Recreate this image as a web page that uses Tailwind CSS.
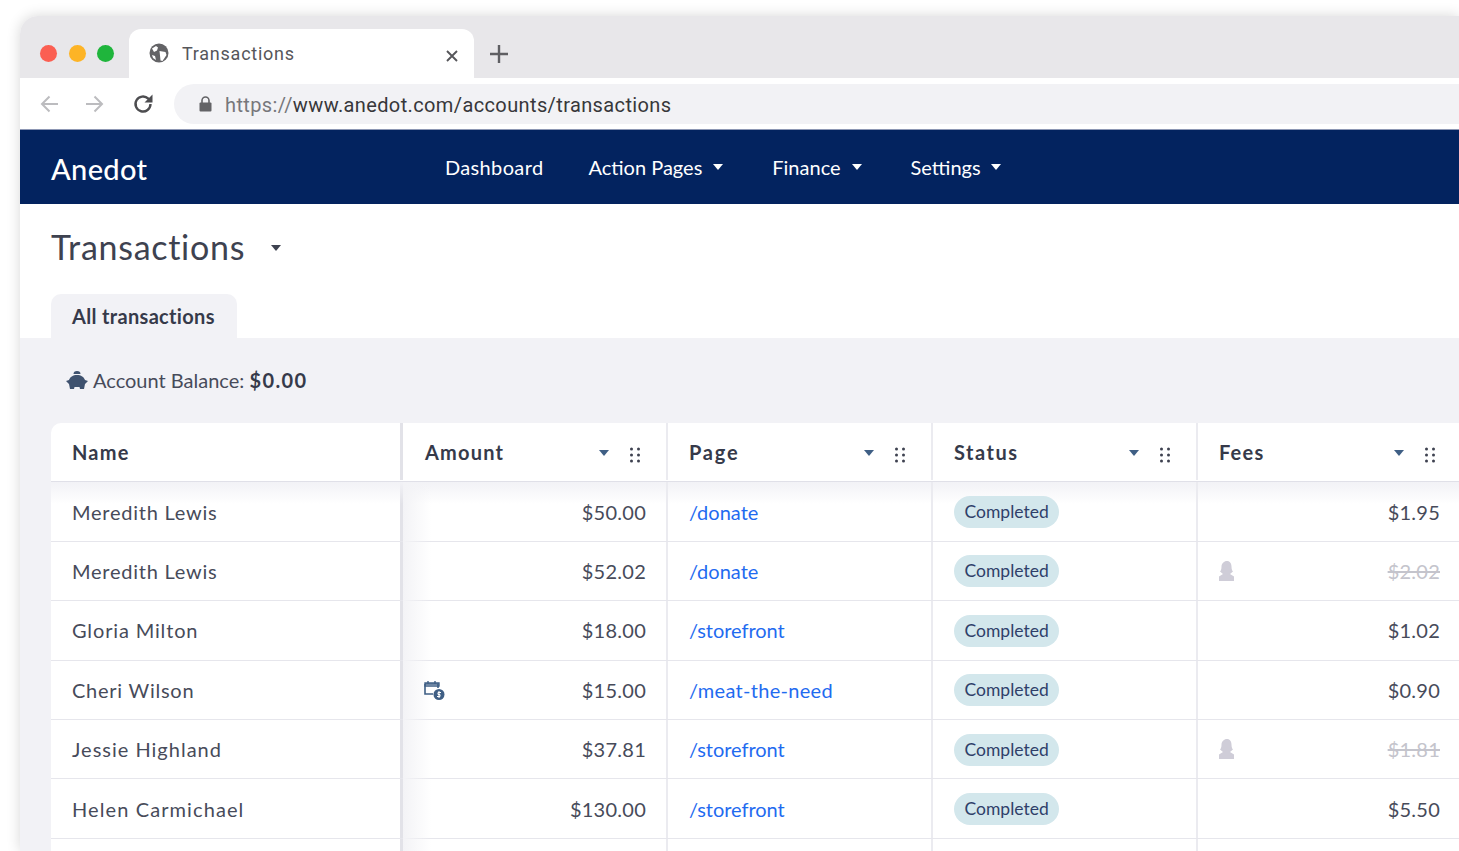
<!DOCTYPE html>
<html lang="en">
<head>
<meta charset="UTF-8">
<title>Transactions</title>
<script src="https://cdn.jsdelivr.net/npm/@tailwindcss/browser@4"></script>
</head>
<body class="bg-white h-[851px] w-[1459px] overflow-hidden font-['Lato',sans-serif]">

<!-- browser window -->
<div class="ml-[20px] mt-[16px] w-[1439px] h-[835px] rounded-tl-[18px] overflow-hidden bg-white shadow-[0_0_14px_rgba(0,0,0,0.16)]">

  <!-- tab strip -->
  <div class="h-[62px] bg-[#e8e7ea] flex items-end font-['Roboto',sans-serif]">
    <div class="w-[109px] h-[62px] flex items-center gap-[11.700px] pl-[20px] pt-[13px]">
      <span class="w-[17px] h-[17px] rounded-full bg-[#fb5f52]"></span>
      <span class="w-[17px] h-[17px] rounded-full bg-[#fdb426]"></span>
      <span class="w-[17px] h-[17px] rounded-full bg-[#1fb53c]"></span>
    </div>
    <div class="w-[345px] h-[49px] bg-white rounded-t-[12px] flex items-center pl-[20px] pr-[16px] pb-[1px]">
      <svg class="w-[20px] h-[20px] mr-[13px]" viewBox="0 0 20 20"><circle cx="10" cy="10" r="9.500" fill="#636366"/><path d="M3 5.500 7 3l2 1.500-1 3-3 1.500zM10.500 8l6 1 1 3-4 6-2-.5-.5-5zM3 12l3 1 1 4-3-2z" fill="#fff"/></svg>
      <span class="text-[18px] text-[#56565a] tracking-[0.75px]">Transactions</span>
      <svg class="w-[12px] h-[12px] ml-auto mt-[5px]" viewBox="0 0 12 12"><path d="M1 1l10 10M11 1 1 11" stroke="#56565a" stroke-width="1.900"/></svg>
    </div>
    <svg class="w-[18px] h-[18px] ml-[16px] mb-[15px]" viewBox="0 0 18 18"><path d="M9 0v18M0 9h18" stroke="#5f5f63" stroke-width="2.400"/></svg>
  </div>

  <!-- toolbar -->
  <div class="h-[52px] bg-white flex items-center border-b border-[#8d97b4] font-['Roboto',sans-serif]">
    <svg class="w-[20px] h-[18px] ml-[20px]" viewBox="0 0 20 18"><path d="M18 9H2M9.500 1.500 2 9l7.500 7.500" fill="none" stroke="#bcbcbf" stroke-width="2"/></svg>
    <svg class="w-[20px] h-[18px] ml-[24px]" viewBox="0 0 20 18"><path d="M2 9h16M10.500 1.500 18 9l-7.500 7.500" fill="none" stroke="#bcbcbf" stroke-width="2"/></svg>
    <svg class="w-[22px] h-[22px] ml-[28px]" viewBox="0 0 22 22"><path d="M18.500 11a7.500 7.500 0 1 1-2.200-5.300L19 8.300" fill="none" stroke="#4d4d50" stroke-width="2.400"/><path d="M20.500 1.500v8h-8z" fill="#4d4d50"/></svg>
    <div class="ml-[20px] flex-1 h-[40px] bg-[#f2f2f5] rounded-l-[20px] flex items-center pl-[25px]">
      <svg class="w-[13px] h-[16px] mr-[13px]" viewBox="0 0 13 16"><path d="M3 7V4.500a3.500 3.500 0 0 1 7 0V7" fill="none" stroke="#636366" stroke-width="1.600"/><rect x="0.500" y="6.500" width="12" height="9" rx="1" fill="#636366"/></svg>
      <span class="text-[20px] tracking-[0.38px] text-[#37373a] pt-[3px]"><span class="text-[#77777b]">https://</span>www.anedot.com/accounts/transactions</span>
    </div>
  </div>

  <!-- app nav -->
  <nav class="h-[74px] bg-[#03235f] flex items-center text-white">
    <span class="ml-[31px] w-[394px] text-[29px] font-medium tracking-[0.35px] mt-[3px]">Anedot</span>
    <a class="text-[20px] mr-[45px] tracking-[0.35px]">Dashboard</a>
    <a class="text-[20px] mr-[49px] flex items-center gap-[11px]">Action Pages <svg class="w-[10px] h-[6px]" viewBox="0 0 10 6"><path d="M0 0h10L5 6z" fill="#fff"/></svg></a>
    <a class="text-[20px] mr-[49px] flex items-center gap-[11px]">Finance <svg class="w-[10px] h-[6px]" viewBox="0 0 10 6"><path d="M0 0h10L5 6z" fill="#fff"/></svg></a>
    <a class="text-[20px] flex items-center gap-[10px]">Settings <svg class="w-[10px] h-[6px]" viewBox="0 0 10 6"><path d="M0 0h10L5 6z" fill="#fff"/></svg></a>
  </nav>

  <!-- page title + tab -->
  <div class="h-[134px] bg-white pl-[31px] flex flex-col">
    <div class="h-[90px] flex items-center pb-[6px] gap-[26px]">
      <h1 class="text-[34px] tracking-[0.72px] text-[#3e4250]">Transactions</h1>
      <svg class="w-[10px] h-[6px] mt-[4px]" viewBox="0 0 10 6"><path d="M0 0h10L5 6z" fill="#3e4250"/></svg>
    </div>
    <div class="w-[186px] h-[44px] bg-[#f2f2f6] rounded-t-[10px] flex items-center pl-[21px] pb-[1px] text-[20px] font-bold text-[#363a4a] tracking-[0.33px]">All transactions</div>
  </div>

  <!-- gray content -->
  <div class="bg-[#f2f2f6] pl-[31px] h-[520px]">
    <div class="h-[85px] flex items-center pb-[1px] text-[20px] text-[#474b5a]">
      <svg class="w-[22px] h-[20px] ml-[15px] mr-[5px]" viewBox="0 0 22 20"><path d="M7.500 4a3.500 3 0 0 1 7 0z" fill="#3f526f"/><path d="M0 11l3-1c1-3 4-5 8-5s7 2 8 5l3 1-3 3-1 5h-4l-.5-2h-5l-.5 2H4l-1-5z" fill="#3f526f"/></svg>
      <span>Account Balance:&nbsp;<b class="font-bold text-[#363a4a] tracking-[1.400px]">$0.00</b></span>
    </div>

    <!-- table -->
    <div class="bg-white rounded-tl-[10px] w-[1408px] text-[20px] text-[#474b5a]">
      <div class="grid grid-cols-[352px_265px_265px_265px_261px] h-[59.400px] pb-[1px] border-b border-[#e0e0e8] font-bold text-[#363a4a] tracking-[1.2px]">
        <div class="flex items-center pl-[21px] border-r-[3px] border-[#e2e2e8]">Name</div>
        <div class="flex items-center pl-[22px] pr-[26px] border-r-2 border-[#ebebf0]">Amount
          <svg class="w-[10px] h-[6px] ml-auto mr-[21px] mt-[3px]" viewBox="0 0 10 6"><path d="M0 0h10L5 6z" fill="#3f5f85"/></svg>
          <svg class="w-[10px] h-[16px] mt-[6px]" viewBox="0 0 10 16"><g fill="#3e4250"><circle cx="1.500" cy="2" r="1.500"/><circle cx="8.500" cy="2" r="1.500"/><circle cx="1.500" cy="8" r="1.500"/><circle cx="8.500" cy="8" r="1.500"/><circle cx="1.500" cy="14" r="1.500"/><circle cx="8.500" cy="14" r="1.500"/></g></svg>
        </div>
        <div class="flex items-center pl-[21px] pr-[26px] border-r-2 border-[#ebebf0] tracking-[1.800px]">Page
          <svg class="w-[10px] h-[6px] ml-auto mr-[21px] mt-[3px]" viewBox="0 0 10 6"><path d="M0 0h10L5 6z" fill="#3f5f85"/></svg>
          <svg class="w-[10px] h-[16px] mt-[6px]" viewBox="0 0 10 16"><g fill="#3e4250"><circle cx="1.500" cy="2" r="1.500"/><circle cx="8.500" cy="2" r="1.500"/><circle cx="1.500" cy="8" r="1.500"/><circle cx="8.500" cy="8" r="1.500"/><circle cx="1.500" cy="14" r="1.500"/><circle cx="8.500" cy="14" r="1.500"/></g></svg>
        </div>
        <div class="flex items-center pl-[21px] pr-[26px] border-r-2 border-[#ebebf0] tracking-[1.500px]">Status
          <svg class="w-[10px] h-[6px] ml-auto mr-[21px] mt-[3px]" viewBox="0 0 10 6"><path d="M0 0h10L5 6z" fill="#3f5f85"/></svg>
          <svg class="w-[10px] h-[16px] mt-[6px]" viewBox="0 0 10 16"><g fill="#3e4250"><circle cx="1.500" cy="2" r="1.500"/><circle cx="8.500" cy="2" r="1.500"/><circle cx="1.500" cy="8" r="1.500"/><circle cx="8.500" cy="8" r="1.500"/><circle cx="1.500" cy="14" r="1.500"/><circle cx="8.500" cy="14" r="1.500"/></g></svg>
        </div>
        <div class="flex items-center pl-[21px] pr-[24px]">Fees
          <svg class="w-[10px] h-[6px] ml-auto mr-[21px] mt-[3px]" viewBox="0 0 10 6"><path d="M0 0h10L5 6z" fill="#3f5f85"/></svg>
          <svg class="w-[10px] h-[16px] mt-[6px]" viewBox="0 0 10 16"><g fill="#3e4250"><circle cx="1.500" cy="2" r="1.500"/><circle cx="8.500" cy="2" r="1.500"/><circle cx="1.500" cy="8" r="1.500"/><circle cx="8.500" cy="8" r="1.500"/><circle cx="1.500" cy="14" r="1.500"/><circle cx="8.500" cy="14" r="1.500"/></g></svg>
        </div>
      </div>

      <div class="relative">
        <div class="absolute inset-x-0 top-0 h-[22px] bg-gradient-to-b from-[#f2f2f6] to-transparent"></div>
        <div class="absolute left-[352px] top-0 w-[28px] h-[420px] bg-gradient-to-r from-[#f3f3f6] to-transparent"></div>

        <div class="grid grid-cols-[352px_265px_265px_265px_261px] h-[59.400px] border-b border-[#e6e6ec]">
          <div class="flex items-center pl-[21px] border-r-[3px] border-[#e2e2e8] tracking-[0.75px]">Meredith Lewis</div>
          <div class="flex items-center justify-end pr-[20px] border-r-2 border-[#ebebf0] tracking-[0.25px] relative">$50.00</div>
          <div class="flex items-center pl-[21px] border-r-2 border-[#ebebf0] text-[#1f6bf0] tracking-[0px] relative">/donate</div>
          <div class="flex items-center pl-[21px] border-r-2 border-[#ebebf0] relative"><span class="h-[32px] px-[10.500px] mt-[1px] rounded-full bg-[#d3e7ec] text-[#2f3f6a] text-[17.500px] leading-[32px]">Completed</span></div>
          <div class="flex items-center justify-end pr-[19px] tracking-[0.25px] relative">$1.95</div>
        </div>
        <div class="grid grid-cols-[352px_265px_265px_265px_261px] h-[59.400px] border-b border-[#e6e6ec]">
          <div class="flex items-center pl-[21px] border-r-[3px] border-[#e2e2e8] tracking-[0.75px]">Meredith Lewis</div>
          <div class="flex items-center justify-end pr-[20px] border-r-2 border-[#ebebf0] tracking-[0.25px] relative">$52.02</div>
          <div class="flex items-center pl-[21px] border-r-2 border-[#ebebf0] text-[#1f6bf0] tracking-[0px] relative">/donate</div>
          <div class="flex items-center pl-[21px] border-r-2 border-[#ebebf0] relative"><span class="h-[32px] px-[10.500px] mt-[1px] rounded-full bg-[#d3e7ec] text-[#2f3f6a] text-[17.500px] leading-[32px]">Completed</span></div>
          <div class="flex items-center justify-between pl-[21px] pr-[19px] tracking-[0.25px] relative">
            <svg class="w-[16px] h-[20px]" viewBox="0 0 16 20"><path d="M8 0c3 0 4.500 2.500 4.500 5.500 0 2.500.5 4 1.500 5l-3 2.500 4 2.500V20H0v-4.500L4 13l-3-2.500c1-1 1.500-2.500 1.500-5C2.500 2.500 5 0 8 0z" fill="#cfcdd8"/></svg>
            <span class="line-through text-[#c4c4cc]">$2.02</span>
          </div>
        </div>
        <div class="grid grid-cols-[352px_265px_265px_265px_261px] h-[59.400px] border-b border-[#e6e6ec]">
          <div class="flex items-center pl-[21px] border-r-[3px] border-[#e2e2e8] tracking-[0.85px]">Gloria Milton</div>
          <div class="flex items-center justify-end pr-[20px] border-r-2 border-[#ebebf0] tracking-[0.25px] relative">$18.00</div>
          <div class="flex items-center pl-[21px] border-r-2 border-[#ebebf0] text-[#1f6bf0] tracking-[-0.05px] relative">/storefront</div>
          <div class="flex items-center pl-[21px] border-r-2 border-[#ebebf0] relative"><span class="h-[32px] px-[10.500px] mt-[1px] rounded-full bg-[#d3e7ec] text-[#2f3f6a] text-[17.500px] leading-[32px]">Completed</span></div>
          <div class="flex items-center justify-end pr-[19px] tracking-[0.25px] relative">$1.02</div>
        </div>
        <div class="grid grid-cols-[352px_265px_265px_265px_261px] h-[59.400px] border-b border-[#e6e6ec]">
          <div class="flex items-center pl-[21px] border-r-[3px] border-[#e2e2e8] tracking-[0.75px]">Cheri Wilson</div>
          <div class="flex items-center justify-between pl-[21px] pr-[20px] border-r-2 border-[#ebebf0] tracking-[0.25px] relative">
            <svg class="w-[21px] h-[20px]" viewBox="0 0 21 20"><path d="M1 4h13v4M1 4v10h8" fill="none" stroke="#3f5f85" stroke-width="1.600"/><path d="M1 3h14v3H1zM4 1v3M11 1v3" fill="none" stroke="#3f5f85" stroke-width="1.400"/><circle cx="15" cy="14.500" r="5.500" fill="#3f5f85"/><path d="M17 12.500h-3v2h2v2h-3M15 11v7" fill="none" stroke="#fff" stroke-width="1"/></svg>
            <span>$15.00</span>
          </div>
          <div class="flex items-center pl-[21px] border-r-2 border-[#ebebf0] text-[#1f6bf0] tracking-[0.3px] relative">/meat-the-need</div>
          <div class="flex items-center pl-[21px] border-r-2 border-[#ebebf0] relative"><span class="h-[32px] px-[10.500px] mt-[1px] rounded-full bg-[#d3e7ec] text-[#2f3f6a] text-[17.500px] leading-[32px]">Completed</span></div>
          <div class="flex items-center justify-end pr-[19px] tracking-[0.25px] relative">$0.90</div>
        </div>
        <div class="grid grid-cols-[352px_265px_265px_265px_261px] h-[59.400px] border-b border-[#e6e6ec]">
          <div class="flex items-center pl-[21px] border-r-[3px] border-[#e2e2e8] tracking-[1px]">Jessie Highland</div>
          <div class="flex items-center justify-end pr-[20px] border-r-2 border-[#ebebf0] tracking-[0.25px] relative">$37.81</div>
          <div class="flex items-center pl-[21px] border-r-2 border-[#ebebf0] text-[#1f6bf0] tracking-[-0.05px] relative">/storefront</div>
          <div class="flex items-center pl-[21px] border-r-2 border-[#ebebf0] relative"><span class="h-[32px] px-[10.500px] mt-[1px] rounded-full bg-[#d3e7ec] text-[#2f3f6a] text-[17.500px] leading-[32px]">Completed</span></div>
          <div class="flex items-center justify-between pl-[21px] pr-[19px] tracking-[0.25px] relative">
            <svg class="w-[16px] h-[20px]" viewBox="0 0 16 20"><path d="M8 0c3 0 4.500 2.500 4.500 5.500 0 2.500.5 4 1.500 5l-3 2.500 4 2.500V20H0v-4.500L4 13l-3-2.500c1-1 1.500-2.500 1.500-5C2.500 2.500 5 0 8 0z" fill="#cfcdd8"/></svg>
            <span class="line-through text-[#c4c4cc]">$1.81</span>
          </div>
        </div>
        <div class="grid grid-cols-[352px_265px_265px_265px_261px] h-[59.400px] border-b border-[#e6e6ec]">
          <div class="flex items-center pl-[21px] border-r-[3px] border-[#e2e2e8] tracking-[1.100px]">Helen Carmichael</div>
          <div class="flex items-center justify-end pr-[20px] border-r-2 border-[#ebebf0] tracking-[0.25px] relative">$130.00</div>
          <div class="flex items-center pl-[21px] border-r-2 border-[#ebebf0] text-[#1f6bf0] tracking-[-0.05px] relative">/storefront</div>
          <div class="flex items-center pl-[21px] border-r-2 border-[#ebebf0] relative"><span class="h-[32px] px-[10.500px] mt-[1px] rounded-full bg-[#d3e7ec] text-[#2f3f6a] text-[17.500px] leading-[32px]">Completed</span></div>
          <div class="flex items-center justify-end pr-[19px] tracking-[0.25px] relative">$5.50</div>
        </div>
        <div class="grid grid-cols-[352px_265px_265px_265px_261px] h-[40px]">
          <div class="border-r-[3px] border-[#e2e2e8]"></div>
          <div class="border-r-2 border-[#ebebf0]"></div>
          <div class="border-r-2 border-[#ebebf0]"></div>
          <div class="border-r-2 border-[#ebebf0]"></div>
          <div></div>
        </div>
      </div>
    </div>
  </div>
</div>
</body>
</html>
